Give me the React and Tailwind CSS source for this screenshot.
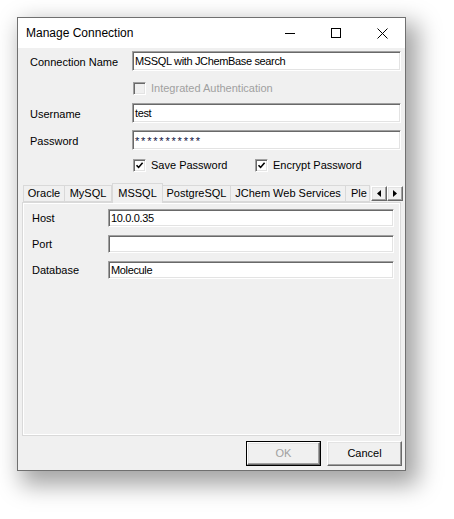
import React from 'react';

const sunken =
  'border border-t-[#a0a0a0] border-l-[#a0a0a0] border-b-white border-r-white shadow-[inset_1px_1px_0_#696969,inset_-1px_-1px_0_#e3e3e3] bg-white';

const TextBox = ({ value, className = '', textClass = 'text-black' }) => (
  <div className={`${sunken} flex items-center pl-[2px] overflow-hidden whitespace-nowrap ${className}`}>
    <span className={`text-[11px] tracking-[-0.35px] leading-none ${textClass}`}>{value}</span>
  </div>
);

const CheckBox = ({ checked, disabled, label, className = '' }) => (
  <div className={`flex items-center h-[13px] ${className}`}>
    <div
      className={`w-[13px] h-[13px] border border-t-[#a0a0a0] border-l-[#a0a0a0] border-b-white border-r-white shadow-[inset_1px_1px_0_#696969,inset_-1px_-1px_0_#e3e3e3] flex items-center justify-center ${
        disabled ? 'bg-[#f0f0f0]' : 'bg-white'
      }`}
    >
      {checked && (
        <svg width="9" height="9" viewBox="0 0 9 9">
          <path d="M1.5 4.2 L3.6 6.4 L7.6 1.8" fill="none" stroke="#000" strokeWidth="1.6" />
        </svg>
      )}
    </div>
    <span className={`ml-[5px] text-[11px] leading-none ${disabled ? 'text-[#a0a0a0]' : 'text-black'}`}>{label}</span>
  </div>
);

const Row = ({ label, children, className = '' }) => (
  <div className={`flex items-center ${className}`}>
    <div className="w-[114px] pl-[12px] pt-[3px] text-[11px] leading-none text-black">{label}</div>
    {children}
  </div>
);

const tabs = [
  { name: 'Oracle', w: 'w-[42px]' },
  { name: 'MySQL', w: 'w-[47px]' },
  { name: 'MSSQL', w: 'w-[51px]', active: true },
  { name: 'PostgreSQL', w: 'w-[68px]' },
  { name: 'JChem Web Services', w: 'w-[115px]' },
  { name: 'Ple', w: 'w-[24px]', clip: true },
];

const raised =
  'border border-t-white border-l-white border-b-[#696969] border-r-[#696969] shadow-[inset_-1px_-1px_0_#a0a0a0,inset_1px_1px_0_#e3e3e3]';

export default function App() {
  return (
    <div
      className="w-[454px] h-[519px] bg-white pt-[17px] pl-[17px]"
      style={{ fontFamily: '"Liberation Sans", Arial, sans-serif' }}
    >
      <div className="w-[389px] h-[454px] border border-[#707070] bg-[#f0f0f0] flex flex-col shadow-[8px_10px_22px_4px_rgba(0,0,0,0.36)]">
        {/* title bar */}
        <div className="h-[30px] bg-white flex items-center shrink-0">
          <span className="pl-[8px] text-[12px] text-black flex-1">Manage Connection</span>
          <div className="w-[46px] h-full flex items-center justify-center">
            <svg width="12" height="10" viewBox="0 0 12 10">
              <path d="M1 5.5 H11" stroke="#000" strokeWidth="1" />
            </svg>
          </div>
          <div className="w-[46px] h-full flex items-center justify-center">
            <svg width="10" height="10" viewBox="0 0 10 10">
              <rect x="0.5" y="0.5" width="9" height="9" fill="none" stroke="#000" strokeWidth="1" />
            </svg>
          </div>
          <div className="w-[46px] h-full flex items-center justify-center">
            <svg width="11" height="11" viewBox="0 0 11 11">
              <path d="M0.5 0.5 L10.5 10.5 M10.5 0.5 L0.5 10.5" stroke="#000" strokeWidth="1" />
            </svg>
          </div>
        </div>

        {/* fields */}
        <Row label="Connection Name" className="mt-[3px]">
          <TextBox value="MSSQL with JChemBase search" className="w-[269px] h-[20px]" />
        </Row>
        <CheckBox disabled label="Integrated Authentication" className="ml-[115px] mt-[11px]" />
        <Row label="Username" className="mt-[8px]">
          <TextBox value="test" className="w-[269px] h-[20px]" />
        </Row>
        <Row label="Password" className="mt-[7px]">
          <TextBox
            value="***********"
            className="w-[269px] h-[20px]"
            textClass="text-[#101040] tracking-[1.8px] pt-[3px]"
          />
        </Row>
        <div className="flex mt-[9px] ml-[115px]">
          <CheckBox checked label="Save Password" className="w-[122px]" />
          <CheckBox checked label="Encrypt Password" />
        </div>

        {/* tabs */}
        <div className="flex items-end h-[19px] mt-[11px] ml-[5px] relative z-10">
          {tabs.map((t) =>
            t.active ? (
              <div
                key={t.name}
                className={`${t.w} h-[20px] -mb-[1px] bg-[#f0f0f0] border border-b-0 border-[#d9d9d9] flex items-center justify-center text-[11px] text-black leading-none`}
              >
                {t.name}
              </div>
            ) : (
              <div
                key={t.name}
                className={`${t.w} h-[17px] bg-[#f0f0f0] border border-[#d9d9d9] border-l-0 first:border-l flex items-center overflow-hidden whitespace-nowrap text-[11px] text-black leading-none ${
                  t.clip ? 'justify-start pl-[5px]' : 'justify-center'
                }`}
              >
                {t.name}
              </div>
            )
          )}
          <div className="flex self-start mt-[3px] ml-[1px]">
            <div className={`${raised} bg-[#f0f0f0] w-[16px] h-[15px] flex items-center justify-center`}>
              <svg width="4" height="7" viewBox="0 0 4 7">
                <path d="M4 0 L0 3.5 L4 7 Z" fill="#000" />
              </svg>
            </div>
            <div className={`${raised} bg-[#f0f0f0] w-[16px] h-[15px] flex items-center justify-center`}>
              <svg width="4" height="7" viewBox="0 0 4 7">
                <path d="M0 0 L4 3.5 L0 7 Z" fill="#000" />
              </svg>
            </div>
          </div>
        </div>
        <div className="mx-[4px] h-[234px] border border-[#d9d9d9] shadow-[inset_1px_1px_0_#ffffff,inset_-1px_-1px_0_#ffffff] bg-[#f0f0f0] flex flex-col gap-[8px] pt-[6px]">
          {[
            ['Host', '10.0.0.35'],
            ['Port', ''],
            ['Database', 'Molecule'],
          ].map(([l, v]) => (
            <div key={l} className="flex items-center">
              <div className="w-[85px] pl-[9px] text-[11px] leading-none text-black">{l}</div>
              <TextBox value={v} className="w-[286px] h-[18px]" />
            </div>
          ))}
        </div>

        {/* buttons */}
        <div className="flex justify-end gap-[6px] mt-[5px] pr-[3px]">
          <div className="w-[75px] h-[25px] border border-black">
            <div className={`${raised} w-full h-full flex items-center justify-center text-[11px] text-[#a0a0a0]`}>
              OK
            </div>
          </div>
          <div className={`${raised} w-[75px] h-[25px] flex items-center justify-center text-[11px] text-black`}>
            Cancel
          </div>
        </div>
      </div>
    </div>
  );
}
